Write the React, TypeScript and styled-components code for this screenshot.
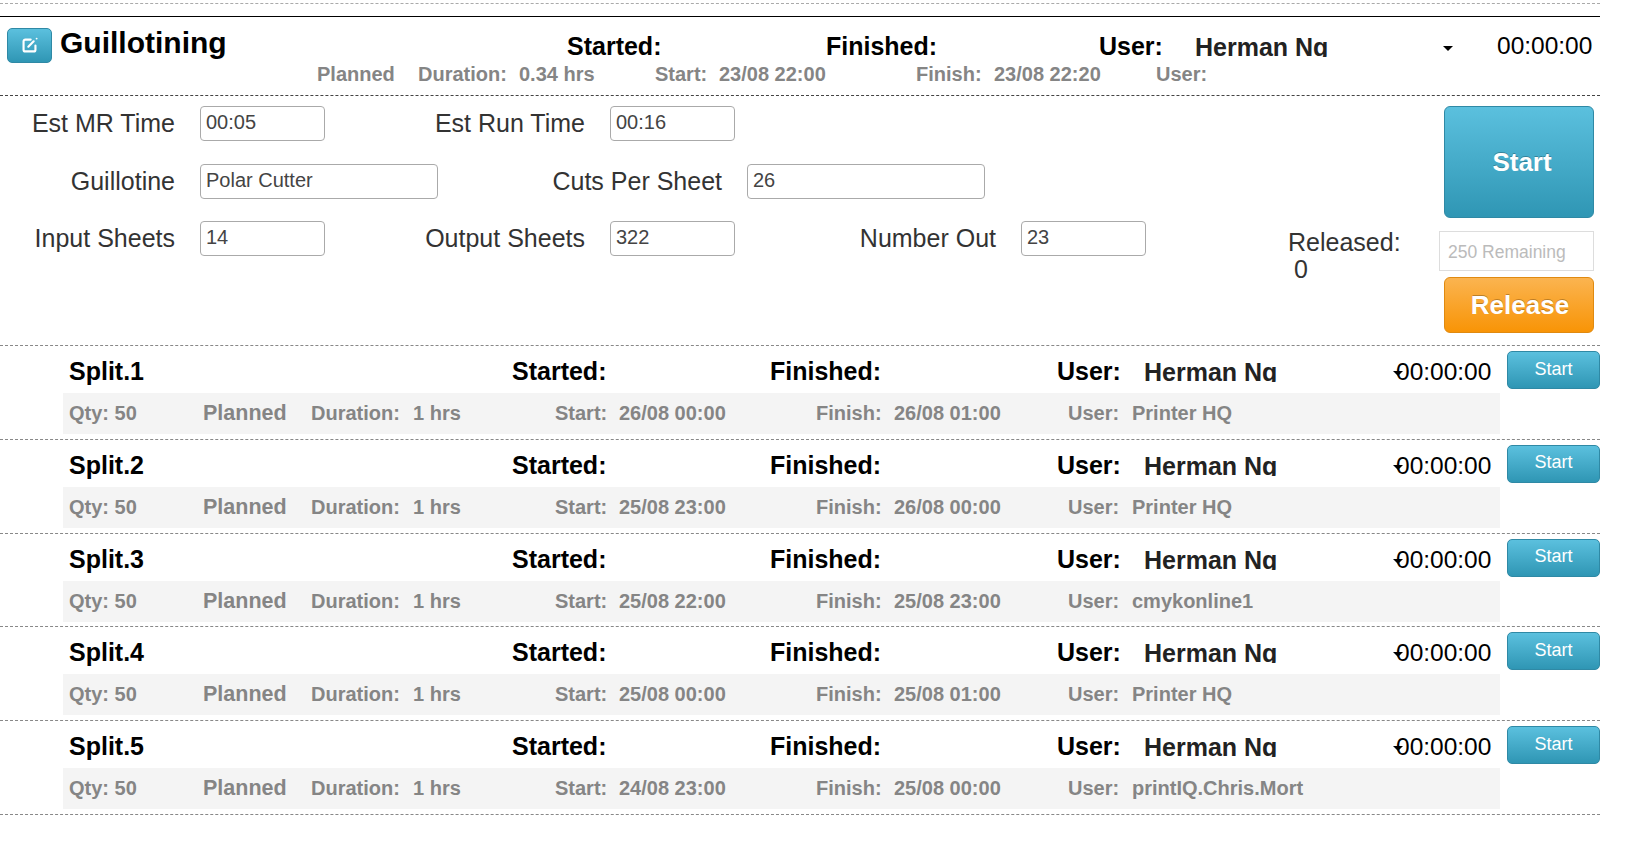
import React from "react";
import styled, { createGlobalStyle } from "styled-components";

const GlobalStyle = createGlobalStyle`
  body {
    margin: 0;
    background: #fff;
    font-family: "Liberation Sans", Arial, sans-serif;
    color: #333;
  }
`;

const Page = styled.div`
  width: 1600px;
  padding-top: 3px;
`;

const TopRule = styled.div`
  border-top: 1px dashed #aaa;
  height: 12px;
`;

const JobHeader = styled.div`
  border-top: 1px solid #000;
  border-bottom: 1px dashed #444;
  height: 78px;
  box-sizing: content-box;
`;

const HeadLine = styled.div`
  display: flex;
  align-items: flex-start;
  height: 47px;
`;

const EditButton = styled.button`
  width: 45px;
  height: 35px;
  margin: 11px 8px 0 7px;
  padding: 0;
  border: 1px solid #2f89a5;
  border-radius: 5px;
  background: linear-gradient(#5bc0de, #2f96b4);
  display: flex;
  align-items: center;
  justify-content: center;
`;

const Title = styled.div`
  width: 507px;
  font-size: 30px;
  font-weight: bold;
  color: #000;
  line-height: 34px;
  margin-top: 9px;
`;

const Strong = styled.div<{ $w: number }>`
  width: ${(p) => p.$w}px;
  flex: none;
  font-size: 25px;
  font-weight: bold;
  color: #000;
  white-space: nowrap;
`;

const HeadLabel = styled(Strong)`
  line-height: 28px;
  margin-top: 15px;
`;

const NameBox = styled.div<{ $w: number }>`
  position: relative;
  width: ${(p) => p.$w}px;
  flex: none;
  height: 28px;
  margin-top: 15px;
  font-size: 25px;
  line-height: 30px;
  font-weight: bold;
  color: #222;
`;

const NameClip = styled.div`
  height: 25px;
  overflow: hidden;
  white-space: nowrap;
`;

const Caret = styled.span<{ $x: number }>`
  position: absolute;
  left: ${(p) => p.$x}px;
  top: 14px;
  border-style: solid;
  border-width: 5px 5px 0;
  border-color: #000 transparent transparent;
`;

const Clock = styled.div`
  font-size: 24.5px;
  line-height: 28px;
  margin-top: 15px;
  color: #000;
  white-space: nowrap;
`;

const HeadClock = styled(Clock)`
  margin-left: 44px;
`;

const SubLine = styled.div`
  display: flex;
  padding-left: 317px;
  line-height: 24px;
  margin-top: -2px;
`;

const Meta = styled.div<{ $w: number }>`
  width: ${(p) => p.$w}px;
  flex: none;
  font-size: 20px;
  font-weight: bold;
  color: #858585;
  white-space: nowrap;
`;

const Form = styled.div`
  display: flex;
  height: 250px;
  box-sizing: border-box;
  padding-top: 10px;
  border-bottom: 1px dashed #888;
`;

const Fields = styled.div`
  width: 1288px;
  flex: none;
`;

const FieldRow = styled.div`
  display: flex;
  height: 35px;
  margin-bottom: 22.5px;
`;

const FieldLabel = styled.label<{ $w: number }>`
  width: ${(p) => p.$w}px;
  flex: none;
  text-align: right;
  font-size: 25px;
  line-height: 34px;
  color: #333;
  white-space: nowrap;
`;

const TextInput = styled.input<{ $w: number }>`
  width: ${(p) => p.$w}px;
  height: 35px;
  flex: none;
  box-sizing: border-box;
  margin: 0 0 0 25px;
  padding: 0 5px 2px;
  border: 1px solid #aaa;
  border-radius: 4px;
  background: #fff;
  font-family: inherit;
  font-size: 20px;
  color: #444;
`;

const Released = styled.div`
  width: 151px;
  flex: none;
  margin-top: 123px;
  font-size: 25px;
  line-height: 27px;
  color: #333;
`;

const ReleasedCount = styled.div`
  padding-left: 6px;
`;

const Actions = styled.div`
  width: 155px;
  flex: none;
  display: flex;
  flex-direction: column;
  align-items: flex-end;
`;

const BigButton = styled.button<{ $orange?: boolean; $h: number }>`
  width: 150px;
  height: ${(p) => p.$h}px;
  padding: 0 0 0 ${(p) => (p.$orange ? 2 : 6)}px;
  border: 1px solid ${(p) => (p.$orange ? "#e08a10" : "#2f89a5")};
  border-radius: 6px;
  background: ${(p) =>
    p.$orange
      ? "linear-gradient(#fbb450, #f89406)"
      : "linear-gradient(#5bc0de, #2f96b4)"};
  color: #fff;
  font-family: inherit;
  font-size: 26px;
  font-weight: bold;
  text-shadow: 0 -1px 0 rgba(0, 0, 0, 0.25);
`;

const RemainingInput = styled.input`
  width: 155px;
  height: 40px;
  box-sizing: border-box;
  margin: 13px 0 6px;
  padding: 2px 8px 0;
  border: 1px solid #ddd;
  font-family: inherit;
  font-size: 17.5px;
  &::placeholder {
    color: #bbb;
    opacity: 1;
  }
`;

const SplitRow = styled.div`
  position: relative;
  height: 93.8px;
  box-sizing: border-box;
  border-bottom: 1px dashed #888;
`;

const SplitHead = styled.div`
  display: flex;
  align-items: flex-start;
  height: 47px;
  padding-left: 69px;
`;

const SplitStrong = styled(Strong)`
  line-height: 28px;
  margin-top: 11px;
`;

const SplitName = styled(NameBox)`
  margin-top: 11px;
`;

const SplitClock = styled(Clock)`
  margin-top: 12px;
`;

const SmallStart = styled.button`
  position: absolute;
  top: 5px;
  right: 0;
  width: 93px;
  height: 38px;
  padding: 0 0 2px;
  border: 1px solid #2f89a5;
  border-radius: 5px;
  background: linear-gradient(#5bc0de, #2f96b4);
  color: #fff;
  font-family: inherit;
  font-size: 18px;
`;

const Band = styled.div`
  display: flex;
  align-items: center;
  margin-left: 63px;
  width: 1437px;
  height: 41px;
  padding-left: 6px;
  box-sizing: border-box;
  background: #f4f4f4;
`;

const Planned = styled(Meta)`
  font-size: 21.5px;
`;

const EditIcon = () => (
  <svg width="19" height="19" viewBox="0 0 16 16" fill="none" stroke="#fff" strokeLinecap="round">
    <path
      d="M9 3H4.5A1.5 1.5 0 0 0 3 4.5v7A1.5 1.5 0 0 0 4.5 13h7a1.5 1.5 0 0 0 1.5-1.5V8"
      strokeWidth="1.8"
    />
    <path d="M7 9l4.5-4.5" strokeWidth="1.8" />
    <circle cx="14" cy="2.2" r="0.8" fill="#fff" stroke="none" />
  </svg>
);

const splits = [
  { name: "Split.1", start: "26/08 00:00", finish: "26/08 01:00", user: "Printer HQ" },
  { name: "Split.2", start: "25/08 23:00", finish: "26/08 00:00", user: "Printer HQ" },
  { name: "Split.3", start: "25/08 22:00", finish: "25/08 23:00", user: "cmykonline1" },
  { name: "Split.4", start: "25/08 00:00", finish: "25/08 01:00", user: "Printer HQ" },
  { name: "Split.5", start: "24/08 23:00", finish: "25/08 00:00", user: "printIQ.Chris.Mort" },
];

function App() {
  return (
    <Page>
      <GlobalStyle />
      <TopRule />
      <JobHeader>
        <HeadLine>
          <EditButton type="button" aria-label="Edit">
            <EditIcon />
          </EditButton>
          <Title>Guillotining</Title>
          <HeadLabel $w={259}>Started:</HeadLabel>
          <HeadLabel $w={273}>Finished:</HeadLabel>
          <HeadLabel $w={96}>User:</HeadLabel>
          <NameBox $w={258}>
            <NameClip>Herman Ng</NameClip>
            <Caret $x={248} />
          </NameBox>
          <HeadClock>00:00:00</HeadClock>
        </HeadLine>
        <SubLine>
          <Meta $w={101}>Planned</Meta>
          <Meta $w={101}>Duration:</Meta>
          <Meta $w={136}>0.34 hrs</Meta>
          <Meta $w={64}>Start:</Meta>
          <Meta $w={197}>23/08 22:00</Meta>
          <Meta $w={78}>Finish:</Meta>
          <Meta $w={162}>23/08 22:20</Meta>
          <Meta $w={60}>User:</Meta>
        </SubLine>
      </JobHeader>
      <Form>
        <Fields>
          <FieldRow>
            <FieldLabel $w={175}>Est MR Time</FieldLabel>
            <TextInput $w={125} defaultValue="00:05" />
            <FieldLabel $w={260}>Est Run Time</FieldLabel>
            <TextInput $w={125} defaultValue="00:16" />
          </FieldRow>
          <FieldRow>
            <FieldLabel $w={175}>Guillotine</FieldLabel>
            <TextInput $w={238} defaultValue="Polar Cutter" />
            <FieldLabel $w={284}>Cuts Per Sheet</FieldLabel>
            <TextInput $w={238} defaultValue="26" />
          </FieldRow>
          <FieldRow>
            <FieldLabel $w={175}>Input Sheets</FieldLabel>
            <TextInput $w={125} defaultValue="14" />
            <FieldLabel $w={260}>Output Sheets</FieldLabel>
            <TextInput $w={125} defaultValue="322" />
            <FieldLabel $w={261}>Number Out</FieldLabel>
            <TextInput $w={125} defaultValue="23" />
          </FieldRow>
        </Fields>
        <Released>
          Released:
          <ReleasedCount>0</ReleasedCount>
        </Released>
        <Actions>
          <BigButton type="button" $h={112}>Start</BigButton>
          <RemainingInput placeholder="250 Remaining" />
          <BigButton type="button" $h={56} $orange>Release</BigButton>
        </Actions>
      </Form>
      {splits.map((s) => (
        <SplitRow key={s.name}>
          <SplitHead>
            <SplitStrong $w={443}>{s.name}</SplitStrong>
            <SplitStrong $w={258}>Started:</SplitStrong>
            <SplitStrong $w={287}>Finished:</SplitStrong>
            <SplitStrong $w={87}>User:</SplitStrong>
            <SplitName $w={252}>
              <NameClip>Herman Ng</NameClip>
              <Caret $x={249} />
            </SplitName>
            <SplitClock>00:00:00</SplitClock>
          </SplitHead>
          <SmallStart type="button">Start</SmallStart>
          <Band>
            <Meta $w={134}>Qty: 50</Meta>
            <Planned $w={108}>Planned</Planned>
            <Meta $w={102}>Duration:</Meta>
            <Meta $w={142}>1 hrs</Meta>
            <Meta $w={64}>Start:</Meta>
            <Meta $w={197}>{s.start}</Meta>
            <Meta $w={78}>Finish:</Meta>
            <Meta $w={174}>{s.finish}</Meta>
            <Meta $w={64}>User:</Meta>
            <Meta $w={300}>{s.user}</Meta>
          </Band>
        </SplitRow>
      ))}
    </Page>
  );
}

export default App;
